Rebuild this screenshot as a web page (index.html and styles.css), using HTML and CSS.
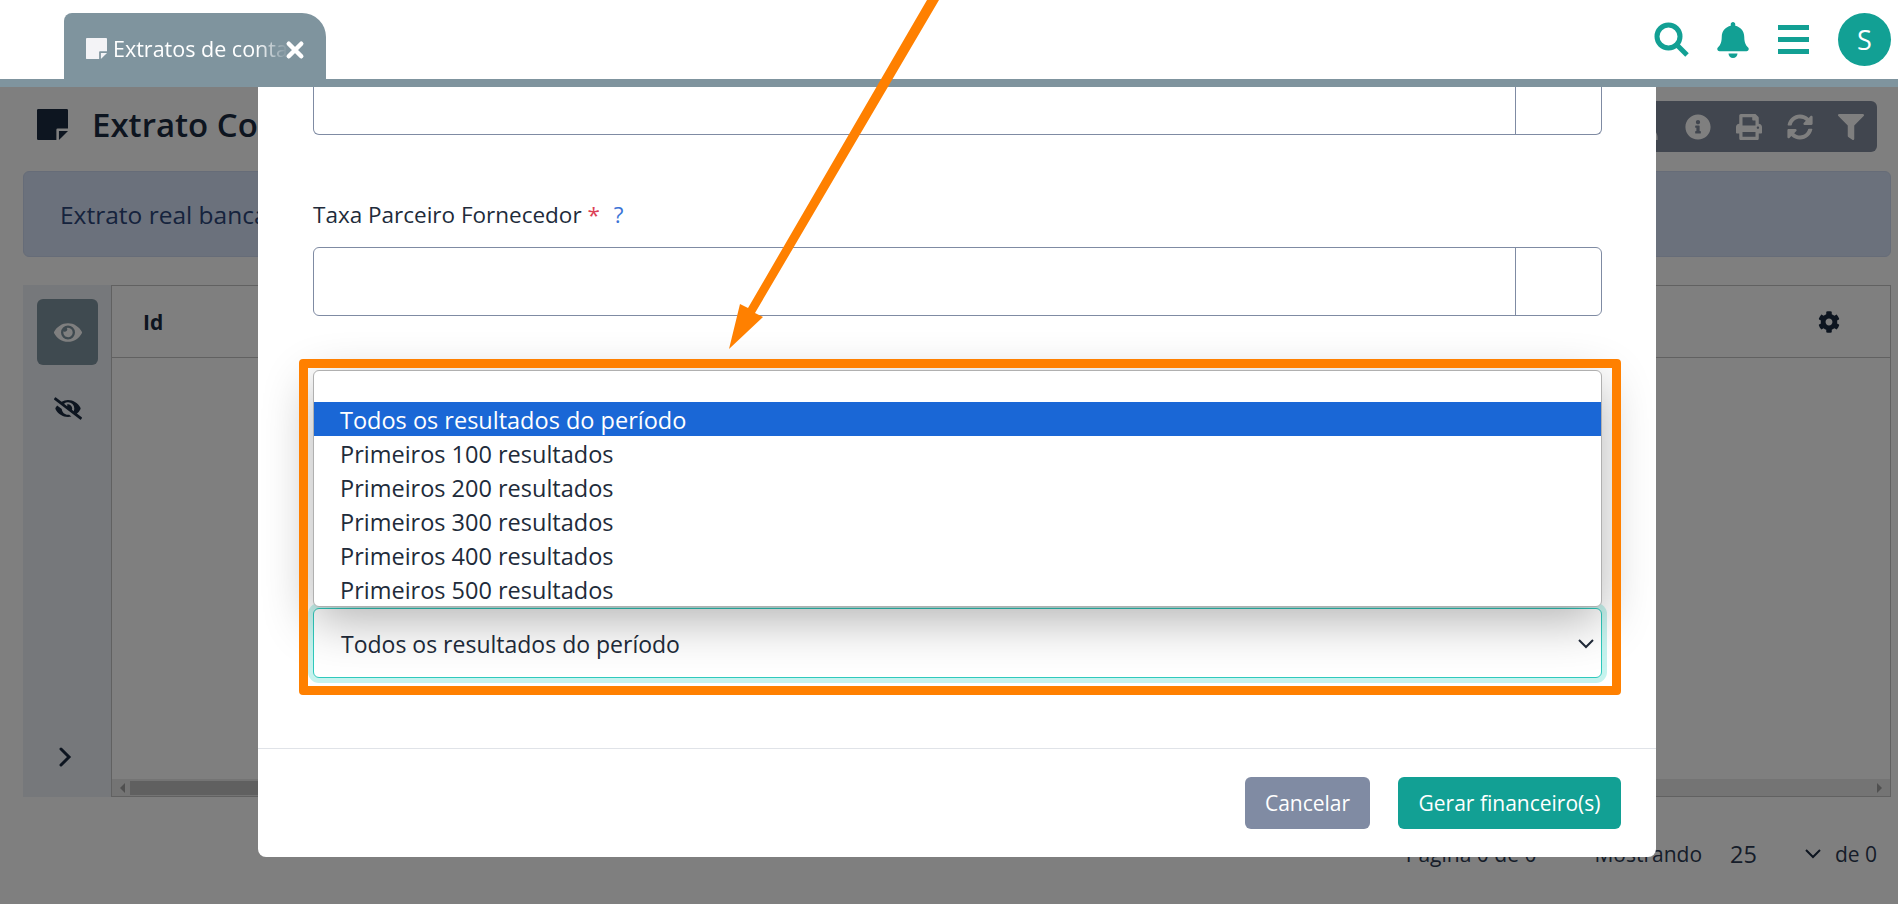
FILE: index.html
```html
<!DOCTYPE html>
<html lang="pt-BR">
<head>
  <meta charset="UTF-8" />
  <title>Extratos de conta</title>
  <link rel="stylesheet" href="styles.css">
</head>
<body>
  <div class="app">
    <header class="topbar">
      <div class="tab">
        <svg class="tab-icon" viewBox="0 0 24 24"><path d="M1 0h22a1 1 0 0 1 1 1v14h-8a1 1 0 0 0-1 1v8H1a1 1 0 0 1-1-1V1a1 1 0 0 1 1-1z"/><path d="M17 17h7l-7 7z"/></svg>
        <span class="tab-label">Extratos de conta</span>
        <svg class="tab-close" viewBox="0 0 16 16"><path d="M3 3l10 10M13 3L3 13"/></svg>
      </div>
      <div class="top-actions">
        <svg class="top-search" viewBox="0 0 36 36"><circle cx="14.5" cy="14.5" r="11.5"/><path d="M23 23l10 10"/></svg>
        <svg class="top-bell" viewBox="0 0 448 512"><path d="M224 512c35.32 0 63.97-28.65 63.97-64H160.03c0 35.35 28.65 64 63.97 64zm215.39-149.71c-19.32-20.76-55.47-51.99-55.47-154.29 0-77.7-54.48-139.9-127.94-155.16V32c0-17.67-14.32-32-31.98-32s-31.98 14.33-31.98 32v20.84C118.56 68.1 64.08 130.3 64.08 208c0 102.3-36.15 133.53-55.47 154.29-6 6.45-8.66 14.16-8.61 21.71.11 16.4 12.98 32 32.1 32h383.8c19.12 0 32-15.6 32.1-32 .05-7.55-2.61-15.27-8.61-21.71z"/></svg>
        <div class="top-bars"><span></span><span></span><span></span></div>
        <div class="avatar">S</div>
      </div>
    </header>

    <main class="page">
      <div class="title-row">
        <h1 class="title">
          <svg class="title-icon" viewBox="0 0 24 24"><path d="M1 0h22a1 1 0 0 1 1 1v14h-8a1 1 0 0 0-1 1v8H1a1 1 0 0 1-1-1V1a1 1 0 0 1 1-1z"/><path d="M17 17h7l-7 7z"/></svg>
          Extrato Contas
        </h1>
        <div class="toolbar">
          <svg viewBox="0 0 512 512"><path d="M256 32a128 128 0 0 1 128 128c0 50-30 94-72 114 90 20 152 90 152 190v48H48v-48c0-100 62-170 152-190-42-20-72-64-72-114A128 128 0 0 1 256 32z"/></svg>
          <svg viewBox="0 0 512 512"><path d="M256 8C119.043 8 8 119.083 8 256c0 136.997 111.043 248 248 248s248-111.003 248-248C504 119.083 392.957 8 256 8zm0 110c23.196 0 42 18.804 42 42s-18.804 42-42 42-42-18.804-42-42 18.804-42 42-42zm56 254c0 6.627-5.373 12-12 12h-88c-6.627 0-12-5.373-12-12v-24c0-6.627 5.373-12 12-12h12v-64h-12c-6.627 0-12-5.373-12-12v-24c0-6.627 5.373-12 12-12h64c6.627 0 12 5.373 12 12v100h12c6.627 0 12 5.373 12 12v24z"/></svg>
          <svg viewBox="0 0 512 512"><path d="M448 192V77.25c0-8.49-3.37-16.62-9.37-22.63L393.37 9.37c-6-6-14.14-9.37-22.63-9.37H96C78.33 0 64 14.33 64 32v160c-35.35 0-64 28.65-64 64v112c0 8.84 7.16 16 16 16h48v96c0 17.67 14.33 32 32 32h320c17.67 0 32-14.33 32-32v-96h48c8.84 0 16-7.16 16-16V256c0-35.35-28.65-64-64-64zm-64 256H128v-96h256v96zm0-224H128V64h192v48c0 8.84 7.16 16 16 16h48v96zm48 72c-13.25 0-24-10.75-24-24 0-13.26 10.75-24 24-24s24 10.74 24 24c0 13.25-10.75 24-24 24z"/></svg>
          <svg viewBox="0 0 512 512"><path d="M370.72 133.28C339.458 104.008 298.888 87.962 255.848 88c-77.458.068-144.328 53.178-162.791 126.85-1.344 5.363-6.122 9.15-11.651 9.15H24.103c-7.498 0-13.194-6.807-11.807-14.176C33.933 94.924 134.813 8 256 8c66.448 0 126.791 26.136 171.315 68.685L463.03 40.97C478.149 25.851 504 36.559 504 57.941V192c0 13.255-10.745 24-24 24H345.941c-21.382 0-32.09-25.851-16.971-40.971l41.75-41.749zM32 296h134.059c21.382 0 32.09 25.851 16.971 40.971l-41.75 41.75c31.262 29.273 71.835 45.319 114.876 45.28 77.418-.07 144.315-53.144 162.787-126.849 1.344-5.363 6.122-9.15 11.651-9.15h57.304c7.498 0 13.194 6.807 11.807 14.176C478.067 417.076 377.187 504 256 504c-66.448 0-126.791-26.136-171.315-68.685L48.97 471.03C33.851 486.149 8 475.441 8 454.059V320c0-13.255 10.745-24 24-24z"/></svg>
          <svg viewBox="0 0 512 512"><path d="M487.976 0H24.028C2.71 0-8.047 25.866 7.058 40.971L192 225.941V432c0 7.831 3.821 15.17 10.237 19.662l80 55.98C298.02 518.69 320 507.493 320 487.98V225.941l184.947-184.97C520.021 25.896 509.338 0 487.976 0z"/></svg>
        </div>
      </div>

      <div class="notice">Extrato real bancário</div>

      <div class="grid-wrap">
        <aside class="side">
          <div class="side-btn active">
            <svg viewBox="0 0 576 512"><path d="M572.52 241.4C518.29 135.59 410.93 64 288 64S57.68 135.64 3.48 241.41a32.35 32.35 0 0 0 0 29.19C57.71 376.41 165.07 448 288 448s230.32-71.64 284.52-177.41a32.35 32.35 0 0 0 0-29.19zM288 400a144 144 0 1 1 144-144 143.93 143.93 0 0 1-144 144zm0-240a95.31 95.31 0 0 0-25.31 3.79 47.85 47.85 0 0 1-66.9 66.9A95.78 95.78 0 1 0 288 160z"/></svg>
          </div>
          <div class="side-btn off">
            <svg viewBox="0 0 640 512"><path d="M320 400c-75.85 0-137.25-58.71-142.9-133.11L72.2 185.82c-13.79 17.3-26.48 35.59-36.72 55.59a32.35 32.35 0 0 0 0 29.19C89.71 376.41 197.07 448 320 448c26.91 0 52.87-4 77.89-10.46L346 397.39a144.13 144.13 0 0 1-26 2.61zm313.82 58.1l-110.55-85.44a331.25 331.25 0 0 0 81.25-102.07 32.35 32.35 0 0 0 0-29.19C550.29 135.59 442.93 64 320 64a308.15 308.15 0 0 0-147.32 37.7L45.46 3.37A16 16 0 0 0 23 6.18L3.37 31.45A16 16 0 0 0 6.18 53.9l588.36 454.73a16 16 0 0 0 22.46-2.81l19.64-25.27a16 16 0 0 0-2.82-22.45zm-183.72-142l-39.3-30.38A94.75 94.75 0 0 0 416 256a94.76 94.76 0 0 0-121.31-92.21A47.65 47.65 0 0 1 304 192a46.64 46.64 0 0 1-1.54 10l-73.61-56.89A142.31 142.31 0 0 1 320 112a143.92 143.92 0 0 1 144 144c0 21.63-5.29 41.79-13.9 60.11z"/></svg>
          </div>
          <svg class="side-more" viewBox="0 0 14 20"><path d="M3 2l8 8-8 8"/></svg>
        </aside>
        <section class="grid">
          <div class="grid-head">
            <span class="col-id">Id</span>
            <svg class="col-cog" viewBox="0 0 512 512"><path d="M487.4 315.7l-42.6-24.6c4.3-23.2 4.3-47 0-70.2l42.6-24.6c4.9-2.8 7.1-8.6 5.5-14-11.1-35.6-30-67.8-54.7-94.6-3.8-4.1-10-5.1-14.8-2.3L380.8 110c-17.9-15.4-38.5-27.3-60.8-35.1V25.8c0-5.6-3.9-10.5-9.4-11.7-36.7-8.2-74.3-7.8-109.2 0-5.5 1.2-9.4 6.1-9.4 11.7V75c-22.2 7.9-42.8 19.8-60.8 35.1L88.7 85.5c-4.9-2.8-11-1.9-14.8 2.3-24.7 26.7-43.6 58.9-54.7 94.6-1.7 5.4.6 11.2 5.5 14L67.3 221c-4.3 23.2-4.3 47 0 70.2l-42.6 24.6c-4.9 2.8-7.1 8.6-5.5 14 11.1 35.6 30 67.8 54.7 94.6 3.8 4.1 10 5.1 14.8 2.3l42.6-24.6c17.9 15.4 38.5 27.3 60.8 35.1v49.2c0 5.6 3.9 10.5 9.4 11.7 36.7 8.2 74.3 7.8 109.2 0 5.5-1.2 9.4-6.1 9.4-11.7v-49.2c22.2-7.9 42.8-19.8 60.8-35.1l42.6 24.6c4.9 2.8 11 1.9 14.8-2.3 24.7-26.7 43.6-58.9 54.7-94.6 1.5-5.5-.7-11.3-5.6-14.1zM256 336c-44.1 0-80-35.9-80-80s35.9-80 80-80 80 35.9 80 80-35.9 80-80 80z"/></svg>
          </div>
          <div class="grid-body"></div>
          <div class="scrollbar">
            <i class="scroll-left"></i>
            <span class="scroll-thumb"></span>
            <i class="scroll-right"></i>
          </div>
        </section>
      </div>

      <div class="pager">
        <span class="pager-pages">Página 0 de 0</span>
        <span class="pager-show">Mostrando</span>
        <span class="pager-size">25</span>
        <svg class="pager-chev" viewBox="0 0 16 10"><path d="M1 1l7 7 7-7"/></svg>
        <span>de 0</span>
      </div>
    </main>

    <div class="backdrop"></div>

    <div class="modal">
      <div class="modal-body">
        <div class="input-group cut">
          <div class="input-main"></div>
          <div class="input-addon"></div>
        </div>

        <label class="field-label">Taxa Parceiro Fornecedor <span class="req">*</span> <span class="help">?</span></label>
        <div class="input-group">
          <div class="input-main"></div>
          <div class="input-addon"></div>
        </div>

        <div class="select-area">
          <div class="dropdown">
            <div class="option blank"></div>
            <div class="option selected">Todos os resultados do período</div>
            <div class="option">Primeiros 100 resultados</div>
            <div class="option">Primeiros 200 resultados</div>
            <div class="option">Primeiros 300 resultados</div>
            <div class="option">Primeiros 400 resultados</div>
            <div class="option">Primeiros 500 resultados</div>
          </div>
          <div class="select">
            <span>Todos os resultados do período</span>
            <svg viewBox="0 0 16 10"><path d="M1 1l7 7 7-7"/></svg>
          </div>
        </div>
        <div class="highlight"></div>
      </div>

      <div class="modal-footer">
        <button class="btn btn-grey">Cancelar</button>
        <button class="btn btn-teal">Gerar financeiro(s)</button>
      </div>
    </div>

    <svg class="arrow" viewBox="0 0 1898 904"><polygon points="927,0 939,0 755,313 763,317 729,349 740,304 748,308"/></svg>
  </div>
</body>
</html>
```

FILE: styles.css
```css
:root {
  --teal: #12a094;
  --slate: #7f949e;
  --ink: #212b3a;
  --dark: #1a2a40;
  --orange: #ff8000;
  --line: #7f8ba3;
}

* {
  box-sizing: border-box;
}

body {
  margin: 0;
  font-family: "Open Sans", sans-serif;
  color: var(--ink);
  background: white;
}

.app {
  position: relative;
  width: 1898px;
  height: 904px;
  overflow: hidden;
}

/* top bar */
.topbar {
  position: relative;
  z-index: 3;
  height: 87px;
  display: flex;
  justify-content: space-between;
  padding: 13px 7px 0 64px;
  background: white;
  border-bottom: 8px solid var(--slate);
}

.tab {
  width: 262px;
  height: 66px;
  display: flex;
  align-items: center;
  gap: 6px;
  padding: 4px 0 0 22px;
  color: white;
  background: var(--slate);
  border-radius: 8px 24px 0 0;
}

.tab-icon {
  width: 21px;
  height: 21px;
  flex: none;
  fill: #f3f3f6;
}

.tab-label {
  flex: none;
  white-space: nowrap;
  font-size: 21.5px;
  -webkit-mask-image: linear-gradient(90deg, black 82%, transparent 100%);
  mask-image: linear-gradient(90deg, black 82%, transparent 100%);
}

.tab-close {
  width: 20px;
  height: 20px;
  flex: none;
  margin: 3px 0 0 -9px;
  fill: none;
  stroke: white;
  stroke-width: 3.6;
  stroke-linecap: round;
}

.top-actions {
  display: flex;
  align-items: center;
  height: 53px;
  fill: var(--teal);
}

.top-search {
  width: 36px;
  height: 36px;
  margin-right: 27px;
  fill: none;
  stroke: var(--teal);
  stroke-width: 5;
}

.top-bell {
  width: 32px;
  height: 36px;
  margin-right: 29px;
}

.top-bars {
  width: 31px;
  display: flex;
  flex-direction: column;
  gap: 7px;
  margin-right: 29px;
}

.top-bars span {
  height: 5px;
  background: var(--teal);
}

.avatar {
  width: 53px;
  height: 53px;
  display: flex;
  align-items: center;
  justify-content: center;
  border-radius: 50%;
  color: white;
  background: var(--teal);
  font-size: 27px;
}

/* page behind the modal */
.page {
  padding: 14px 7px 0 23px;
}

.title-row {
  height: 51px;
  display: flex;
  justify-content: space-between;
  padding-right: 14px;
}

.title {
  margin: 0;
  height: 47px;
  display: flex;
  align-items: center;
  gap: 24px;
  padding-left: 14px;
  font-size: 33px;
  font-weight: 600;
  color: var(--dark);
}

.title-icon {
  width: 31px;
  height: 31px;
  fill: var(--dark);
}

.toolbar {
  width: 330px;
  display: flex;
  align-items: center;
  justify-content: flex-end;
  gap: 25px;
  padding-right: 13px;
  background: #828c9e;
  border-radius: 6px;
  fill: white;
}

.toolbar svg {
  width: 26px;
  height: 26px;
}

.notice {
  height: 86px;
  margin-top: 19px;
  padding: 0 36px;
  display: flex;
  align-items: center;
  font-size: 24.5px;
  color: #2c467a;
  background: #d6e2f8;
  border: 1px solid #cdd9f0;
  border-radius: 6px;
}

.grid-wrap {
  height: 512px;
  margin-top: 28px;
  display: flex;
}

.side {
  width: 88px;
  display: flex;
  flex-direction: column;
  padding: 14px 14px 0;
  background: #ecf0f6;
}

.side-btn {
  width: 61px;
  height: 66px;
  display: flex;
  align-items: center;
  justify-content: center;
  border-radius: 6px;
  fill: var(--dark);
}

.side-btn.off {
  margin-top: 10px;
}

.side-btn svg {
  width: 28px;
  height: 25px;
}

.side-btn.active {
  background: #7f94a0;
  fill: white;
}

.side-more {
  width: 14px;
  height: 20px;
  margin: auto 0 30px 21px;
  fill: none;
  stroke: var(--dark);
  stroke-width: 3;
  stroke-linecap: round;
}

.grid {
  flex: 1;
  display: flex;
  flex-direction: column;
  border: 1px solid #c2c2c2;
}

.grid-head {
  height: 72px;
  display: flex;
  align-items: center;
  justify-content: space-between;
  padding: 0 50px 0 31px;
  border-bottom: 1px solid #c2c2c2;
}

.col-id {
  font-size: 21px;
  font-weight: 700;
  color: var(--dark);
}

.col-cog {
  width: 22px;
  height: 22px;
  fill: var(--dark);
}

.grid-body {
  flex: 1;
}

.scrollbar {
  height: 17px;
  display: flex;
  align-items: center;
  justify-content: space-between;
  padding: 0 5px;
  background: #e8e8e8;
}

.scroll-left {
  border: 5px solid transparent;
  border-right-color: #a0a0a0;
  margin-left: -2px;
}

.scroll-thumb {
  width: 600px;
  height: 14px;
  margin-right: auto;
  margin-left: 5px;
  background: #c0c0c0;
}

.scroll-right {
  border: 5px solid transparent;
  border-left-color: #a0a0a0;
  margin-right: -2px;
}

.pager {
  margin-top: 41px;
  padding-right: 14px;
  display: flex;
  align-items: center;
  justify-content: flex-end;
  font-size: 21px;
  color: #2c3a52;
}

.pager-pages {
  margin-right: 58px;
}

.pager-show {
  margin-right: 28px;
}

.pager-size {
  margin-right: 48px;
  font-size: 23.5px;
}

.pager-chev {
  width: 16px;
  height: 10px;
  margin-right: 14px;
  fill: none;
  stroke: var(--dark);
  stroke-width: 2;
}

.backdrop {
  position: absolute;
  inset: 0;
  z-index: 1;
  background: rgba(0, 0, 0, 0.5);
}

/* modal */
.modal {
  position: absolute;
  z-index: 2;
  left: 258px;
  top: 87px;
  width: 1398px;
  height: 770px;
  display: flex;
  flex-direction: column;
  background: white;
  border-radius: 0 0 8px 8px;
}

.modal-body {
  position: relative;
  flex: 1;
  padding: 0 54px 0 55px;
}

.input-group {
  height: 69px;
  display: flex;
  border: 1px solid var(--line);
  border-radius: 6px;
}

.input-group.cut {
  height: 48px;
  border-top: 0;
  border-radius: 0 0 6px 6px;
}

.input-main {
  flex: 1;
  border-right: 1px solid var(--line);
}

.input-addon {
  width: 85px;
}

.field-label {
  display: block;
  height: 34px;
  margin: 63px 0 15px;
  font-size: 22.5px;
  line-height: 34px;
}

.req {
  color: #dc3f56;
}

.help {
  margin-left: 8px;
  color: #3b74d6;
}

.select-area {
  position: relative;
  height: 308px;
  margin-top: 54px;
  display: flex;
  align-items: flex-end;
}

.dropdown {
  position: absolute;
  z-index: 2;
  top: 0;
  left: 0;
  right: 0;
  height: 237px;
  overflow: hidden;
  background: white;
  border: 1px solid #b0b0b0;
  border-radius: 6px;
  box-shadow: 0 14px 50px rgba(0, 0, 0, 0.3);
}

.option {
  height: 34px;
  padding-left: 26px;
  font-size: 23.5px;
  line-height: 36px;
  white-space: nowrap;
}

.option.blank {
  height: 31px;
}

.option.selected {
  color: white;
  background: #1a67d6;
}

.select {
  width: 100%;
  height: 70px;
  display: flex;
  align-items: center;
  justify-content: space-between;
  padding: 2px 7px 0 27px;
  font-size: 23px;
  background: white;
  border: 1px solid #2fc9bd;
  border-radius: 6px;
  box-shadow: 0 0 0 5px #c6f3ee;
}

.select svg {
  width: 16px;
  height: 10px;
  fill: none;
  stroke: var(--ink);
  stroke-width: 2;
}

.highlight {
  position: absolute;
  z-index: 3;
  left: 41px;
  top: 272px;
  width: 1322px;
  height: 336px;
  border: 9px solid var(--orange);
  border-radius: 4px;
}

.modal-footer {
  height: 109px;
  display: flex;
  justify-content: flex-end;
  gap: 28px;
  padding: 28px 35px 0 0;
  border-top: 1px solid #e0e3e8;
}

.btn {
  height: 52px;
  border: none;
  border-radius: 6px;
  color: white;
  font-family: inherit;
  font-size: 21px;
}

.btn-grey {
  width: 125px;
  background: #808ba3;
}

.btn-teal {
  width: 223px;
  background: var(--teal);
}

.arrow {
  position: absolute;
  z-index: 4;
  left: 0;
  top: 0;
  width: 1898px;
  height: 904px;
  fill: var(--orange);
  pointer-events: none;
}
```
